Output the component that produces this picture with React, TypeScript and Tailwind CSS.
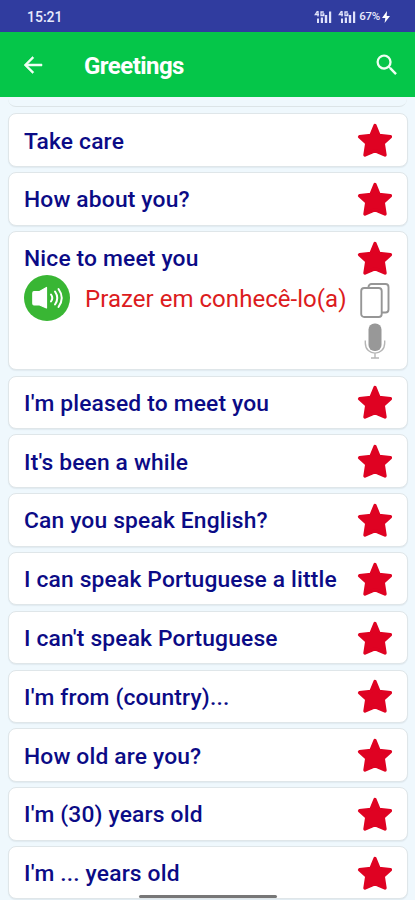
import {ReactNode} from "react";

const before = ["Take care", "How about you?"];

const after = [
    "I'm pleased to meet you",
    "It's been a while",
    "Can you speak English?",
    "I can speak Portuguese a little",
    "I can't speak Portuguese",
    "I'm from (country)...",
    "How old are you?",
    "I'm (30) years old",
    "I'm ... years old",
];

function Star() {
    return (
        <svg viewBox="0 0 36 36" className="w-9 h-9 shrink-0" fill="#df0222" stroke="#df0222" strokeWidth="3.4"
             strokeLinejoin="round">
            <path d="M18 3.6L22 13.4L33.4 14.800L26.200 21.300L28 33L18 28.600L8 33L9.800 21.300L2.600 14.800L14 13.400Z"/>
        </svg>
    );
}

function Signal() {
    return (
        <svg viewBox="0 0 18 14" className="w-[18px] h-[14px]" fill="#dfe2fa">
            <path d="M3.500 1L1.300 4.500H5M4 1V6.500M9.800 2H7V5.500H9.800V3.800H8.400" fill="none" stroke="#dfe2fa" strokeWidth="1.3"/>
            <path d="M3 8.500h2v4.500h-2zM6.800 7.500h2.200v5.500H6.800zM10.800 5h2.400v8h-2.400zM15 1.500h2.200v11.500h-2.200z"/>
        </svg>
    );
}

function Card({text, children}: {text: string; children?: ReactNode}) {
    return (
        <div className="rounded-lg border border-[#dfe6e9] bg-white pl-[15px] pr-[14px] shadow-[0_1px_1px_rgba(120,140,150,0.12)]">
            <div className="flex h-[51.5px] items-center justify-between">
                <span className="pt-[3px] font-['Roboto',sans-serif] text-[22.8px] font-medium tracking-[0.17px] whitespace-nowrap text-[#0b0b86]">
                    {text}
                </span>
                <Star/>
            </div>
            {children}
        </div>
    );
}

export default function App() {
    return (
        <div className="relative h-[900px] w-[415px] overflow-hidden bg-[#eff8fd] font-['Roboto',sans-serif]">
            <div className="flex h-8 items-center justify-between bg-[#303c9f] pr-[25px] pl-[27px] text-[#e8eafc]">
                <span className="pt-[2px] text-[14px] font-medium">15:21</span>
                <div className="flex items-center pt-px">
                    <Signal/>
                    <span className="w-[6px]"/>
                    <Signal/>
                    <span className="ml-[3px] text-[11.500px] font-medium tracking-[-0.3px]">67%</span>
                    <svg viewBox="0 0 8 12" className="ml-[2px] h-3 w-2" fill="#fff">
                        <path d="M5 0L0 7H3.300L2.600 12L8 5H4.700Z"/>
                    </svg>
                </div>
            </div>
            <div className="flex h-[65px] items-center bg-[#05c649] pr-[14px] pl-[21px] text-white">
                <svg viewBox="0 0 24 24" className="h-6 w-6" fill="#effff3" stroke="#effff3" strokeWidth="0.5">
                    <path d="M21 11H6.800l6.100-6.100L11.500 3.500 3 12l8.500 8.500 1.400-1.400L6.800 13H21z"/>
                </svg>
                <h1 className="ml-[39px] pt-[2px] text-[24px] font-bold tracking-[-0.55px]">Greetings</h1>
                <svg viewBox="0 0 24 24" className="ml-auto h-[28px] w-[28px]" fill="#effff3">
                    <path d="M15.500 14h-.79l-.28-.27A6.470 6.470 0 0 0 16 9.500 6.500 6.500 0 1 0 9.500 16c1.610 0 3.090-.59 4.230-1.570l.27.28v.79l5 4.990L20.490 19l-4.990-5zm-6 0C7.010 14 5 11.990 5 9.500S7.010 5 9.500 5 14 7.010 14 9.500 11.990 14 9.500 14z"/>
                </svg>
            </div>
            <div className="mx-2 h-[10px] rounded-b-lg border-b border-[#dce4e7]"/>
            <div className="mt-[6.4px] flex flex-col gap-[5.3px] pr-[7px] pl-2">
                {before.map((text) => <Card key={text} text={text}/>)}
                <Card text="Nice to meet you">
                    <div className="-mt-[10px] flex h-[95.800px]">
                        <svg viewBox="0 0 46 46" className="mt-[2px] h-[46px] w-[46px] shrink-0">
                            <circle cx="23" cy="23" r="23" fill="#39b634"/>
                            <path d="M10 16.500H15.500L22.500 12.500V33L15.500 30H10Q8.800 30 8.800 28.500V18Q8.800 16.500 10 16.500Z" fill="#fff" stroke="#fff" strokeWidth="1.200" strokeLinejoin="round"/>
                            <path d="M27 19.500Q29.600 23 27 26.500M31 16.500Q35.500 23 31 29.500M34.500 14Q41 23 34.500 32" fill="none" stroke="#fff" strokeWidth="2" strokeLinecap="round"/>
                        </svg>
                        <span className="mt-[9px] ml-[15px] text-[24px] leading-[34px] tracking-[0.04px] whitespace-nowrap text-[#dc1b20]">
                            Prazer em conhecê-lo(a)
                        </span>
                        <div className="ml-auto flex w-9 shrink-0 flex-col items-center">
                            <svg viewBox="0 0 30 36" className="mt-[9.500px] h-9 w-[30px]" fill="#fff" stroke="#969696" strokeWidth="1.900">
                                <rect x="8.500" y="1" width="20" height="28.500" rx="3"/>
                                <rect x="1.200" y="5" width="20.500" height="29" rx="3"/>
                            </svg>
                            <svg viewBox="0 0 22 36" className="mt-[4px] h-9 w-[22px]">
                                <rect x="4.500" y="0.500" width="13" height="27.500" rx="6" fill="#989898"/>
                                <path d="M1.300 17.500V20C1.300 33.500 20.700 33.500 20.700 20V17.500M11 30V35M7 35H15" fill="none" stroke="#b5b5b5" strokeWidth="1.400"/>
                            </svg>
                        </div>
                    </div>
                </Card>
                {after.map((text) => <Card key={text} text={text}/>)}
            </div>
            <div className="absolute top-[895px] left-[139px] h-[3px] w-[138px] rounded-full bg-[#777]"/>
        </div>
    );
}
